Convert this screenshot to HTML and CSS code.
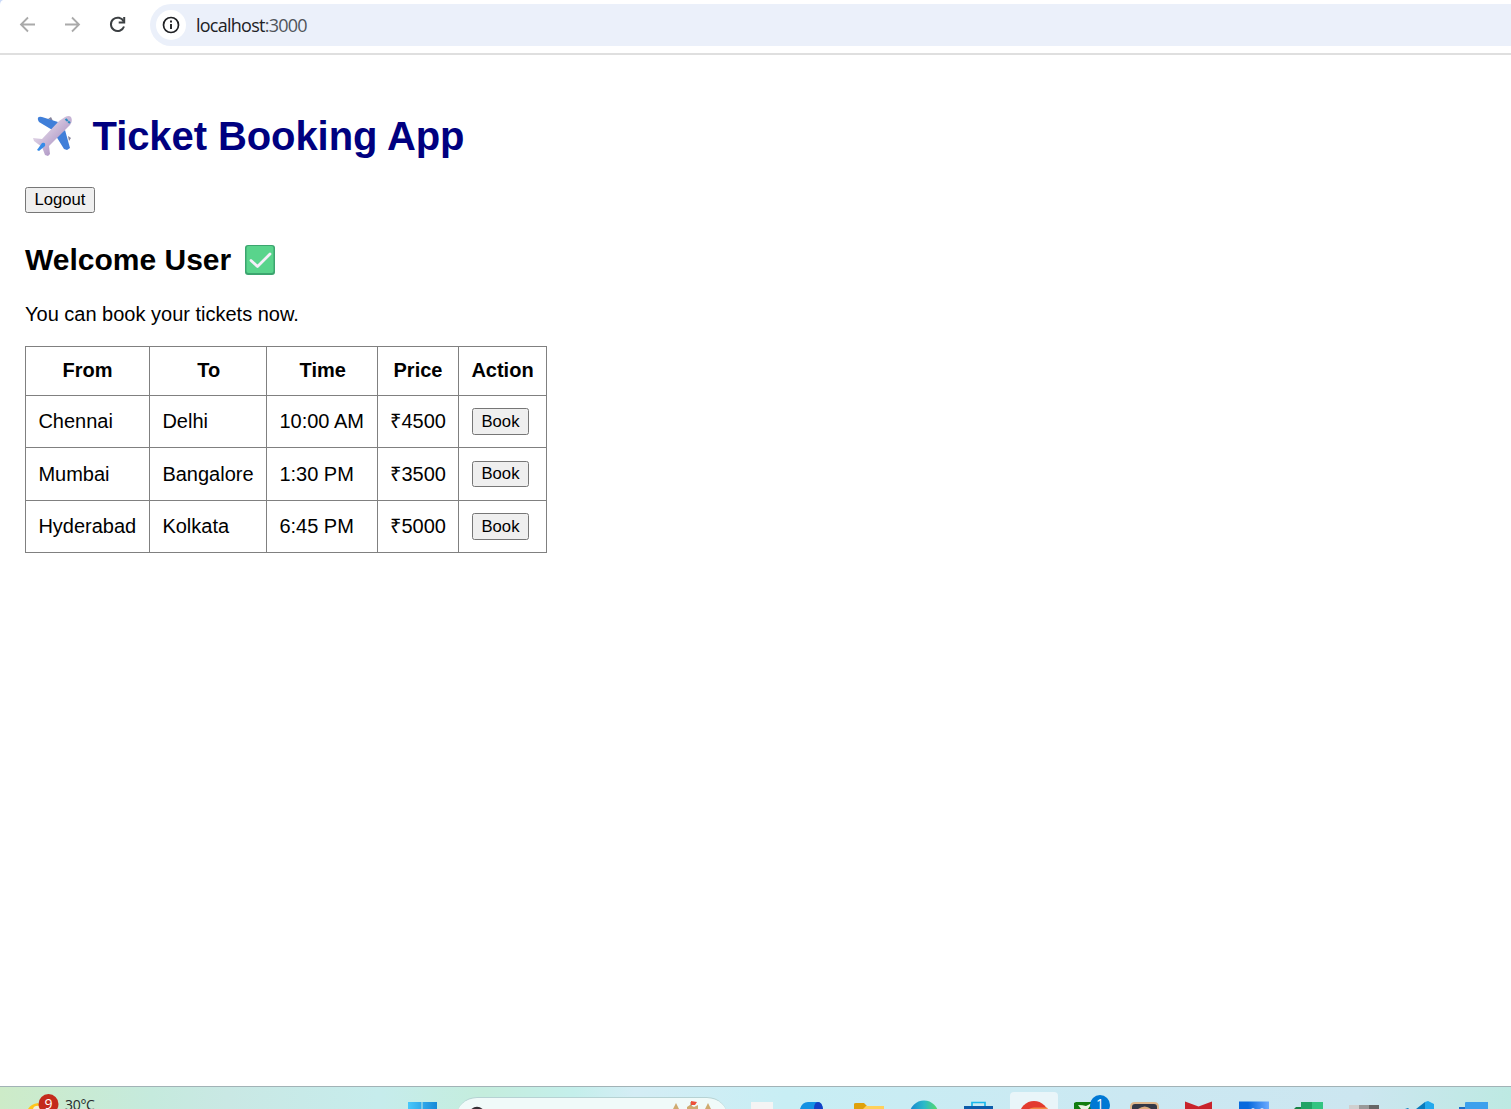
FILE: index.html
```html
<!DOCTYPE html>
<html lang="en">
<head>
<meta charset="utf-8">
<title>Ticket Booking App</title>
<link rel="stylesheet" href="styles.css">
</head>
<body>
<header class="toolbar">
  <svg class="nav" width="140" height="53" viewBox="0 0 140 53" fill="none" stroke-width="1.8">
    <path d="M0 0h3Q0 1 0 5z" fill="#c9d9f8"/>
    <path d="M35 24.5H21.5M28 17.5l-7 7 7 7M65 24.5h13.500M72 17.500l7 7-7 7" stroke="#aaa"/>
    <path d="M123.700 21.500A6.700 6.700 0 1 0 124 26.500" stroke="#3c4043" stroke-width="2"/>
    <path d="M124.200 17v5.500h-5.500" stroke="#3c4043" stroke-width="2"/>
  </svg>
  <div class="address">
    <span class="info"><svg width="30" height="30" viewBox="0 0 30 30"><circle cx="15" cy="15" r="7.500" fill="none" stroke="#202124" stroke-width="1.700"/><path d="M15 10.500v2M15 14v5" stroke="#202124" stroke-width="1.900"/></svg></span>
    <span class="url">localhost<span class="port">:3000</span></span>
  </div>
</header>
<main class="page">
  <h1 class="title">
    <svg class="plane" width="42" height="42" viewBox="0 0 42 42">
      <defs><linearGradient id="hull" x1="0" y1="0" x2="1" y2="1"><stop offset=".3" stop-color="#dccfe3"/><stop offset=".7" stop-color="#b39cc8"/></linearGradient></defs>
      <path d="M16 4l3-2 2 4zM36 21l3 2-2 3z" fill="#87849b"/>
      <path d="M26 7L10 2Q5 1 6 5l1 2 15 9zM33 15l5 18-3 2-3-1-8-13z" fill="#407fd9"/>
      <path d="M33 2Q37 0 39 2q2 4-1 8L17 31l1 8-2 2-3-1-3-8-8-6-1-3 9 1L27 6z" fill="url(#hull)"/>
      <path d="M5 35l5-7q4-1 3 3l-6 5z" fill="#368be8"/>
      <path d="M33.500 4l4.500 4" stroke="#278bc1" stroke-width="2" stroke-dasharray="3 .6"/>
    </svg>
    <span>Ticket Booking App</span>
  </h1>
  <button class="button logout">Logout</button>
  <h2 class="welcome">
    <span>Welcome User</span>
    <svg class="check" width="30" height="30" viewBox="0 0 30 30"><rect width="30" height="30" rx="3" fill="#3ca56f"/><rect x="1.500" y="1" width="27" height="27" rx="2" fill="#59d48c"/><path d="M6 15.500l6.500 6L25 9" fill="none" stroke="#f5eff9" stroke-width="2.800" stroke-linecap="round" stroke-linejoin="round"/></svg>
  </h2>
  <p class="note">You can book your tickets now.</p>
  <table class="flights">
    <colgroup><col class="from"><col class="to"><col class="time"><col class="price"><col class="action"></colgroup>
    <tr class="head"><th>From</th><th class="nudge">To</th><th class="nudge">Time</th><th>Price</th><th>Action</th></tr>
    <tr class="r1"><td>Chennai</td><td>Delhi</td><td>10:00 AM</td><td>₹4500</td><td><button class="button book">Book</button></td></tr>
    <tr class="r2"><td>Mumbai</td><td>Bangalore</td><td>1:30 PM</td><td>₹3500</td><td><button class="button book short">Book</button></td></tr>
    <tr class="r1"><td>Hyderabad</td><td>Kolkata</td><td>6:45 PM</td><td>₹5000</td><td><button class="button book">Book</button></td></tr>
  </table>
</main>
<footer class="taskbar">
  <div class="weather">
    <svg width="60" height="22" viewBox="0 0 60 22"><path d="M28 22q3-5 10-6l4 6z" fill="#ffc51b"/><path d="M33 22q1-4 7-3v3z" fill="#f4efd9"/><circle cx="48.500" cy="17" r="10" fill="#c42b1c"/><text x="48.500" y="22" text-anchor="middle" class="count">9</text></svg>
    <span class="degrees">30°C</span>
  </div>
  <svg class="start" width="30" height="22" viewBox="0 0 30 22"><defs><linearGradient id="win"><stop stop-color="#48c8fb"/><stop offset="1" stop-color="#1689d8"/></linearGradient></defs><path d="M1 15h13.500v7H1zM15.500 15H30v7H15.500z" fill="url(#win)"/></svg>
  <div class="search">
    <svg width="272" height="12" viewBox="0 0 272 12"><path d="M15 13q6-6 12 0" fill="none" stroke="#352f35" stroke-width="2.500"/><path d="M216 13l4-8 4 8zM248 13l4-8 4 8zM231 13V9l3-2 4 2 4-2v6z" fill="#cfaa70"/><path d="M235 8V4" stroke="#a07b4f"/><path d="M235 3l6 1-2 3h-4z" fill="#ed5039"/></svg>
  </div>
  <div class="apps">
    <svg viewBox="0 0 55 22"><path d="M20 15h22v7H20z" fill="#f4f4f4"/></svg>
    <svg viewBox="0 0 55 22"><path d="M14 22q2-7 8-7h10q4 0 5 7z" fill="#1491e3"/><path d="M28 22q0-7 4-7 4 0 5 7z" fill="#143fc5"/></svg>
    <svg viewBox="0 0 55 22"><path d="M13 22v-5q0-1 2-1h8l3 3h17v3z" fill="#dfa10b"/><path d="M25 19h18v3H22z" fill="#ffd05a"/></svg>
    <svg viewBox="0 0 55 22"><defs><linearGradient id="sea"><stop stop-color="#1685d1"/><stop offset=".5" stop-color="#2bb9c9"/><stop offset="1" stop-color="#58dc63"/></linearGradient></defs><circle cx="28" cy="28" r="14.500" fill="url(#sea)"/></svg>
    <svg viewBox="0 0 55 22"><path d="M21 19v-3.500h13V19" fill="none" stroke="#19b8ec" stroke-width="1.700"/><path d="M13 19h29v3H13z" fill="#0c5caa"/></svg>
    <svg viewBox="0 0 55 22"><path d="M4 22V9q0-4 4-4h40q4 0 4 4v13z" fill="#e9f5f9"/><circle cx="28" cy="28.500" r="14.500" fill="#e33b2f"/><path d="M23 22q2-1.500 5-1.500h13l1 1.500z" fill="#f48b45"/></svg>
    <svg viewBox="0 0 55 22"><path d="M13 22v-6l2-1h20v7z" fill="#107c10"/><path d="M17 18q5 0 8 1l6-3-4 6h-7z" fill="#e7f4e6"/><circle cx="39" cy="18" r="10" fill="#0078d4"/><text x="39" y="22" text-anchor="middle" class="count">1</text></svg>
    <svg viewBox="0 0 55 22"><path d="M14 22v-2q0-5 5-5h19q5 0 5 5v2z" fill="#dfb78c"/><path d="M16 22v-2q0-3 3-3h19q3 0 3 3v2z" fill="#343847"/><path d="M22 22q7-5 13 0z" fill="#dcaa7c"/></svg>
    <svg viewBox="0 0 55 22"><path d="M14 14.500l13.500 5 13.500-5V22H14z" fill="#c8232b"/></svg>
    <svg viewBox="0 0 55 22"><defs><linearGradient id="blue"><stop offset=".3" stop-color="#0869dd"/><stop offset="1" stop-color="#6baaff"/></linearGradient></defs><path d="M13 14.500h30V22H13z" fill="url(#blue)"/><path d="M25 22l2-1 2 1zM34 22l2-1 2 1z" fill="#dcecff"/></svg>
    <svg viewBox="0 0 55 22"><path d="M13 22l2-2h5v2z" fill="#178246"/><path d="M20 15h12v7H20z" fill="#21a366"/><path d="M31 15h11v7H31z" fill="#33c481"/></svg>
    <svg viewBox="0 0 55 22"><path d="M13 18h10v4H13z" fill="#cfcfcf"/><path d="M23 18h10v4H23z" fill="#999"/><path d="M33 18h10v4H33z" fill="#666"/></svg>
    <svg viewBox="0 0 55 22"><path d="M14 22l3-1 1 1zM25 22l9-7h3v7z" fill="#087bbd"/><path d="M34 15l3-1 6 3v5h-9z" fill="#23a9ed"/></svg>
    <svg viewBox="0 0 55 22"><path d="M13 20h7v2h-7z" fill="#1b70ca"/><path d="M19 22v-6q0-1 1-1h22v7z" fill="#3ba0ed"/></svg>
  </div>
</footer>
</body>
</html>
```
FILE: styles.css
```css
* { box-sizing: border-box; }
body { margin: 0; height: 1109px; overflow: hidden; display: flex; flex-direction: column; background: #fff; color: #000; font: 20px/23px "Liberation Sans", Arial, sans-serif; }
svg { display: block; flex: none; }
.toolbar { height: 55px; flex: none; display: flex; border-bottom: 2px solid #dfdfdf; }
.address { flex: 1; height: 42px; margin: 4px 0 0 10px; padding-left: 6px; display: flex; align-items: center; background: #ebf0fa; border-radius: 21px 0 0 21px; }
.info { width: 30px; height: 30px; background: #fff; border-radius: 50%; }
.url { margin-left: 10px; font: 18px/24px "Open Sans", "Noto Sans", sans-serif; letter-spacing: -.75px; color: #202124; }
.port { color: #50545a; }
.page { flex: 1; padding: 58px 25px 0; }
.title { display: flex; align-items: center; margin: 0; height: 46px; font-size: 40px; line-height: 46px; letter-spacing: -.08px; color: #000080; }
.plane { margin: 0 19px 1px 6.500px; }
.button { display: block; padding: 0; border: 1px solid #767676; border-radius: 2.500px; background: #efefef; color: #000; font: 16.667px/19px "Liberation Sans", Arial, sans-serif; text-align: center; }
.logout { width: 70px; height: 26px; margin-top: 28px; padding-bottom: 2px; }
.welcome { display: flex; align-items: center; gap: 14px; margin: 30px 0 0; height: 34px; font-size: 30px; line-height: 34px; }
.check { margin-bottom: 1px; }
.note { margin: 26px 0 0; }
.flights { margin-top: 20px; width: 522px; border-collapse: collapse; table-layout: fixed; }
.flights th, .flights td { border: 1px solid #808080; padding: 0 0 2px; }
.flights td { padding: 0 0 1px 12.400px; }
.flights .nudge { padding-left: 1.500px; }
.flights .r2 td { padding-bottom: 0; }
.from { width: 124px; }
.to { width: 117px; }
.time { width: 111px; }
.price { width: 81px; }
.action { width: 88px; }
.head { height: 49px; }
.r1 { height: 52px; }
.r2 { height: 53px; }
.book { width: 57px; height: 27px; margin-left: .6px; }
.short { height: 26px; padding-bottom: 1px; }
.taskbar { height: 23px; flex: none; display: flex; overflow: hidden; border-top: 1px solid #a2b2b6; background: linear-gradient(90deg, #cdebc8 0, #c5eadd 10%, #c9e8e4 15%, #c6ecec 25%, #c4eddd 32%, #c4efeb 38%, #d4edf5 42%, #c8eef4 52%, #cbe8f2 75%, #cce6f0 90%, #bde9e2 100%); }
.weather { width: 407px; display: flex; }
.degrees { margin: 8px 0 0 5px; height: 14px; font: 14px/20px "Open Sans", "Noto Sans", sans-serif; letter-spacing: -.3px; color: #252a2b; }
.count { font: 14px "Open Sans", "Noto Sans", sans-serif; fill: #fff; }
.search { width: 272px; height: 42px; margin: 10px 0 0 19px; flex: none; border-top: 1px solid #b6d2d3; border-radius: 21px; background: #f0faf9; }
.apps { display: flex; margin-left: 3px; }
.apps svg { width: 55px; height: 22px; }
```
